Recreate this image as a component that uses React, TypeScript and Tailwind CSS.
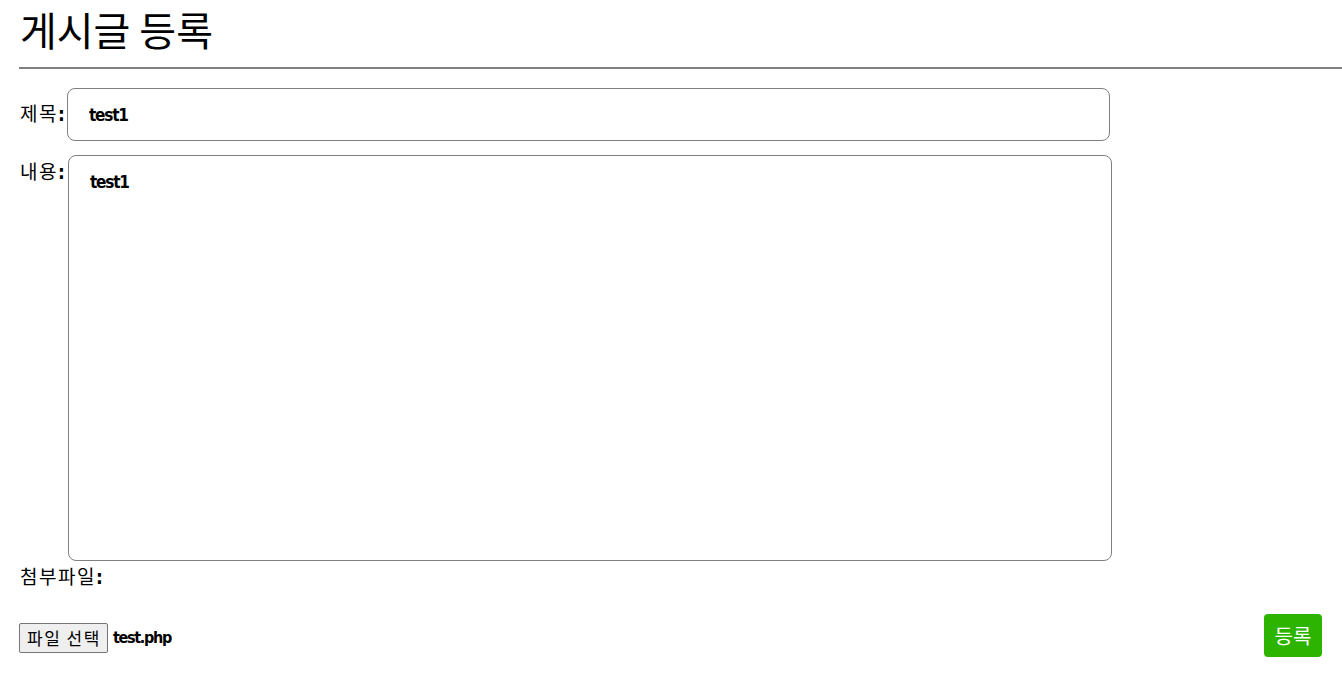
import React from "react";

const kr = { fontFamily: '"Noto Sans CJK KR", "Noto Sans", sans-serif' };
const narrow = { fontFamily: '"DejaVu Sans Condensed", "DejaVu Sans", "Noto Sans CJK KR", sans-serif' };

function Label({ text }: { text: string }) {
  return (
    <label className="text-[19px] text-black leading-none whitespace-nowrap">
      <span style={kr} className="tracking-[1.5px]">{text}</span>
      <span style={narrow} className="font-bold font-stretch-condensed">:</span>
    </label>
  );
}

export default function App() {
  return (
    <div className="min-h-[699px] w-full bg-white text-black" style={kr}>
      <h1 className="pl-5 pt-[5px] text-[40px] leading-[48px] font-normal" style={kr}>
        게시글 등록
      </h1>
      <hr className="ml-[19px] mt-[14px] border-0 h-[2px] bg-[#808080]" />

      <form className="pl-5 pt-[19px]" onSubmit={(e) => e.preventDefault()}>
        {/* 제목 */}
        <div className="flex items-center">
          <div className="w-[47px] shrink-0 -mt-[2px]">
            <Label text="제목" />
          </div>
          <input
            defaultValue="test1"
            className="w-[1043px] h-[53px] rounded-lg border border-[#808080] pl-[21px] text-[17px] font-bold font-stretch-condensed tracking-[-1.2px] text-black outline-none"
            style={narrow}
          />
        </div>

        {/* 내용 */}
        <div className="flex items-start mt-[14px]">
          <div className="w-[48px] shrink-0 pt-[5px]">
            <Label text="내용" />
          </div>
          <textarea
            defaultValue="test1"
            className="w-[1044px] h-[406px] rounded-lg border border-[#808080] pl-[21px] pt-[15px] text-[17px] font-bold font-stretch-condensed tracking-[-1.2px] text-black outline-none resize-none leading-[22px]"
            style={narrow}
          />
        </div>

        {/* 첨부파일 */}
        <div className="mt-[5px] h-[20px] flex items-center">
          <Label text="첨부파일" />
        </div>

        <div className="flex items-center justify-between mt-[29px] pr-5">
          <div className="flex items-center gap-[5px] -ml-px mt-[3px]">
            <span
              className="h-[30px] pl-[7px] pr-[6px] flex items-center rounded-[2px] border border-[#767676] bg-[#efefef] text-[17px] tracking-[1.5px] text-black"
              style={kr}
            >
              파일 선택
            </span>
            <span className="text-[16px] font-bold font-stretch-condensed tracking-[-1.3px]" style={narrow}>
              test.php
            </span>
          </div>
          <button
            type="submit"
            className="w-[58px] h-[43px] -mt-px rounded-[4px] bg-[#2db400] text-white text-[20px] flex items-center justify-center"
            style={kr}
          >
            등록
          </button>
        </div>
      </form>
    </div>
  );
}
